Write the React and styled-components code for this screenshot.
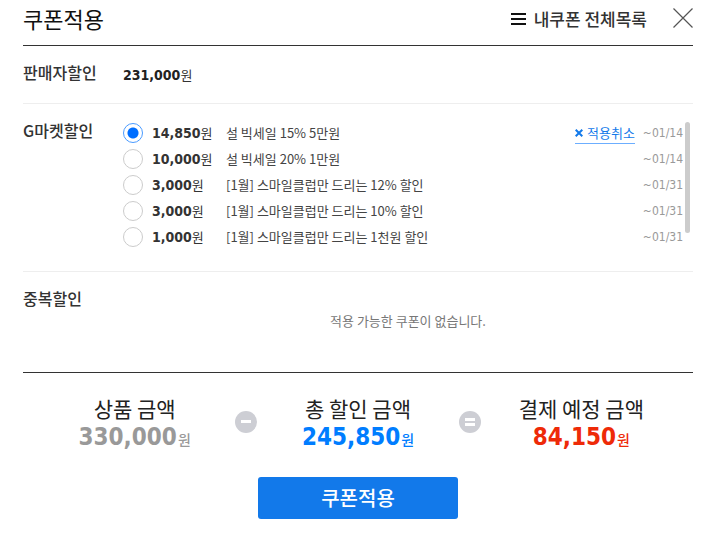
import React, { useState } from 'react';
import styled, { createGlobalStyle } from 'styled-components';

const coupons = [
  { id: 'c1', amount: '14,850', name: '설 빅세일 15% 5만원', until: '~01/14' },
  { id: 'c2', amount: '10,000', name: '설 빅세일 20% 1만원', until: '~01/14' },
  { id: 'c3', amount: '3,000', name: '[1월] 스마일클럽만 드리는 12% 할인', until: '~01/31' },
  { id: 'c4', amount: '3,000', name: '[1월] 스마일클럽만 드리는 10% 할인', until: '~01/31' },
  { id: 'c5', amount: '1,000', name: '[1월] 스마일클럽만 드리는 1천원 할인', until: '~01/31' },
];

function App() {
  const [selected, setSelected] = useState('c1');

  return (
    <>
      <GlobalStyle />
      <Layer>
        <Header>
          <Title>쿠폰적용</Title>
          <ListLink href="#coupons">
            <svg width="15" height="12" viewBox="0 0 15 12" aria-hidden="true">
              <path d="M0 1h15M0 6h15M0 11h15" stroke="#111" strokeWidth="2" />
            </svg>
            내쿠폰 전체목록
          </ListLink>
          <CloseButton type="button" aria-label="닫기">
            <svg width="20" height="20" viewBox="0 0 20 20" aria-hidden="true">
              <path d="M.5.5l19 19M19.5.5l-19 19" stroke="#555" strokeWidth="1.2" />
            </svg>
          </CloseButton>
        </Header>

        <Section $minHeight="58px">
          <SectionTitle>판매자할인</SectionTitle>
          <SellerAmount>
            <Amount>231,000</Amount>원
          </SellerAmount>
        </Section>

        <Section $minHeight="168px">
          <SectionTitle>G마켓할인</SectionTitle>
          <CouponList id="coupons">
            {coupons.map((coupon) => (
              <CouponRow key={coupon.id}>
                <Radio
                  type="radio"
                  name="coupon"
                  id={coupon.id}
                  checked={selected === coupon.id}
                  onChange={() => setSelected(coupon.id)}
                />
                <CouponLabel htmlFor={coupon.id}>
                  <CouponPrice>
                    <Amount>{coupon.amount}</Amount>원
                  </CouponPrice>
                  <CouponName>{coupon.name}</CouponName>
                </CouponLabel>
                {selected === coupon.id && (
                  <CancelButton type="button" onClick={() => setSelected(null)}>
                    <svg width="8" height="8" viewBox="0 0 8 8" aria-hidden="true">
                      <path d="M.7.7l6.6 6.6M7.3.7L.7 7.3" stroke="#1279ea" strokeWidth="2" />
                    </svg>
                    적용취소
                  </CancelButton>
                )}
                <Until>{coupon.until}</Until>
              </CouponRow>
            ))}
          </CouponList>
          <ScrollThumb />
        </Section>

        <Section $minHeight="101px" $last>
          <SectionTitle>중복할인</SectionTitle>
          <Empty>적용 가능한 쿠폰이 없습니다.</Empty>
        </Section>

        <Summary>
          <SummaryItem>
            <SummaryLabel>상품 금액</SummaryLabel>
            <Total $color="#999">
              <Amount>330,000</Amount>
              <Won>원</Won>
            </Total>
          </SummaryItem>
          <Sign viewBox="0 0 22 22" aria-hidden="true">
            <circle cx="11" cy="11" r="11" fill="#cdced4" />
            <path d="M6 10.5h10" stroke="#fff" strokeWidth="3" />
          </Sign>
          <SummaryItem>
            <SummaryLabel>총 할인 금액</SummaryLabel>
            <Total $color="#007dff">
              <Amount>245,850</Amount>
              <Won>원</Won>
            </Total>
          </SummaryItem>
          <Sign viewBox="0 0 22 22" aria-hidden="true">
            <circle cx="11" cy="11" r="11" fill="#cdced4" />
            <path d="M6 8.5h10M6 13.5h10" stroke="#fff" strokeWidth="3" />
          </Sign>
          <SummaryItem>
            <SummaryLabel>결제 예정 금액</SummaryLabel>
            <Total $color="#ee2a08">
              <Amount>84,150</Amount>
              <Won>원</Won>
            </Total>
          </SummaryItem>
        </Summary>

        <ApplyButton type="button">쿠폰적용</ApplyButton>
      </Layer>
    </>
  );
}

const GlobalStyle = createGlobalStyle`
  * {
    box-sizing: border-box;
  }

  body {
    margin: 0;
    background: #fff;
    color: #333;
    font-family: "Noto Sans CJK KR", sans-serif;
    font-size: 13px;
    line-height: 20px;
  }

  svg {
    display: block;
    flex: none;
  }
`;

const Layer = styled.main`
  display: flex;
  flex-direction: column;
  padding: 0 18px 24px 23px;
`;

const Header = styled.header`
  display: flex;
  align-items: center;
  height: 46px;
  padding-bottom: 10px;
  border-bottom: 1px solid #333;
`;

const Title = styled.h1`
  flex: 1;
  margin: 0;
  color: #111;
  font-size: 22px;
  font-weight: 400;
  line-height: 32px;
`;

const ListLink = styled.a`
  display: flex;
  align-items: center;
  gap: 8px;
  padding-top: 2px;
  color: #333;
  font-size: 17px;
  font-weight: 500;
  text-decoration: none;
`;

const PlainButton = styled.button`
  padding: 0;
  border: 0;
  background: none;
  font-family: inherit;
  cursor: pointer;
`;

const CloseButton = styled(PlainButton)`
  margin-left: 26px;
`;

const Section = styled.section`
  display: flex;
  align-items: flex-start;
  min-height: ${(props) => props.$minHeight};
  padding: 16px 0;
  border-bottom: 1px solid ${(props) => (props.$last ? '#333' : '#eee')};
`;

const SectionTitle = styled.h2`
  flex: none;
  width: 100px;
  margin: 0;
  font-size: 16px;
  font-weight: 500;
  line-height: 20px;
`;

const Amount = styled.strong`
  font-family: "DejaVu Sans Condensed", "DejaVu Sans", sans-serif;
  font-weight: 700;
`;

const SellerAmount = styled.p`
  margin: 0;
  padding-top: 3px;

  ${Amount} {
    color: #222;
    font-size: 14px;
  }
`;

const CouponList = styled.ul`
  flex: 1;
  margin: 0;
  padding: 0;
  list-style: none;
`;

const CouponRow = styled.li`
  display: flex;
  align-items: center;
  height: 26px;
`;

const Radio = styled.input`
  appearance: none;
  flex: none;
  width: 20px;
  height: 20px;
  margin: 0 9px 0 0;
  border: 1px solid #ccc;
  border-radius: 50%;
  background: #fff;

  &:checked {
    border-color: #4a9bff;
    background: radial-gradient(circle, #006eff 5px, #fff 6px);
  }
`;

const CouponLabel = styled.label`
  display: flex;
  flex: 1;
`;

const CouponPrice = styled.span`
  width: 74px;

  ${Amount} {
    font-size: 14px;
  }
`;

const CouponName = styled.span`
  color: #444;
`;

const CancelButton = styled(PlainButton)`
  display: flex;
  align-items: center;
  gap: 4px;
  border-bottom: 1px solid #6caeff;
  color: #1279ea;
  font-size: 13px;
  line-height: 20px;
`;

const Until = styled.span`
  margin: 0 2px 0 8px;
  color: #999;
  font-family: "DejaVu Sans Condensed", "DejaVu Sans", sans-serif;
  font-size: 12px;
`;

const ScrollThumb = styled.div`
  width: 5px;
  height: 111px;
  margin: 2px 3px 0 0;
  border-radius: 3px;
  background: #ccc;
`;

const Empty = styled.p`
  flex: 1;
  margin: 0;
  padding-top: 23px;
  color: #777;
  text-align: center;
`;

const Summary = styled.div`
  display: flex;
  align-items: center;
  padding-top: 20px;
`;

const SummaryItem = styled.div`
  flex: 1;
  text-align: center;
`;

const SummaryLabel = styled.div`
  color: #222;
  font-size: 21px;
  line-height: 30px;
`;

const Total = styled.div`
  display: flex;
  align-items: baseline;
  justify-content: center;
  gap: 1px;
  color: ${(props) => props.$color};
  line-height: 28px;

  ${Amount} {
    font-size: 24px;
  }
`;

const Won = styled.span`
  font-size: 14px;
  font-weight: 500;
  line-height: 20px;
`;

/* sits on the border between two items without taking width */
const Sign = styled.svg`
  width: 22px;
  height: 22px;
  margin: 0 -11px;
`;

const ApplyButton = styled(PlainButton)`
  align-self: center;
  width: 200px;
  height: 42px;
  margin-top: 26px;
  padding-bottom: 2px;
  border-radius: 3px;
  background: #1279ea;
  color: #fff;
  font-size: 20px;
  font-weight: 500;
`;

export default App;
